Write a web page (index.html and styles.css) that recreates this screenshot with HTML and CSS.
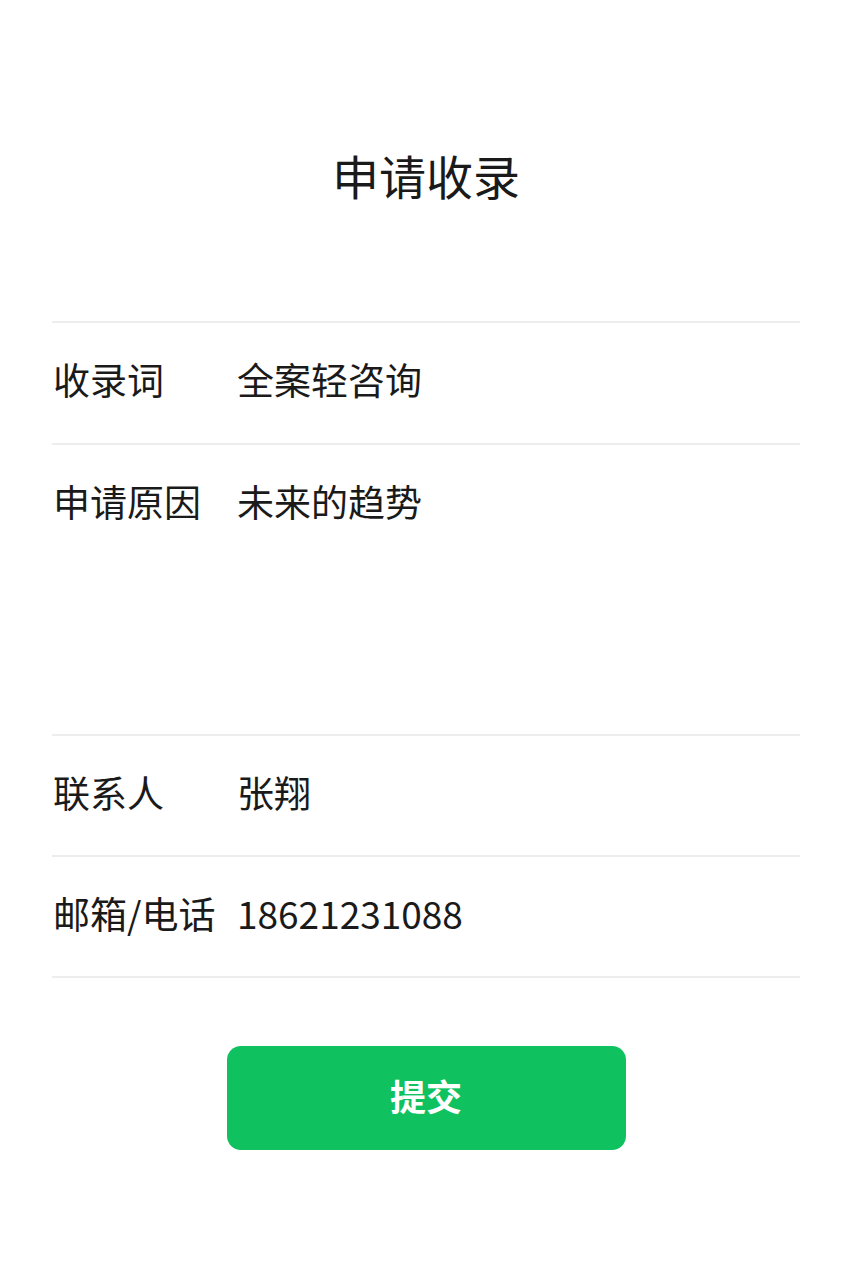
FILE: index.html
```html
<!DOCTYPE html>
<html lang="zh-CN">
<head>
<meta charset="utf-8">
<title>申请收录</title>
<link rel="stylesheet" href="styles.css">
</head>
<body>
<main class="page">
  <h1 class="title">申请收录</h1>
  <section class="form">
    <div class="row">
      <span class="label">收录词</span>
      <span class="value">全案轻咨询</span>
    </div>
    <div class="row row-tall">
      <span class="label">申请原因</span>
      <span class="value">未来的趋势</span>
    </div>
    <div class="row row-short">
      <span class="label">联系人</span>
      <span class="value">张翔</span>
    </div>
    <div class="row row-short">
      <span class="label">邮箱/电话</span>
      <span class="value">18621231088</span>
    </div>
  </section>
  <div class="actions">
    <button class="submit" type="button">提交</button>
  </div>
</main>
</body>
</html>
```

FILE: styles.css
```css
html, body {
  margin: 0;
  padding: 0;
  background: #ffffff;
}

body {
  font-family: "Noto Sans CJK SC", "Noto Sans", sans-serif;
  color: #1a1a1a;
}

.page {
  width: 853px;
  padding: 150px 53px 0 52px;
  box-sizing: border-box;
}

.title {
  margin: 0 0 121px;
  font-size: 47px;
  line-height: 50px;
  font-weight: 400;
  text-align: center;
  color: #1a1a1a;
}

.form {
  border-bottom: 2px solid #ededed;
}

.row {
  display: flex;
  align-items: flex-start;
  border-top: 2px solid #ededed;
  height: 120px;
  font-size: 37px;
  line-height: 112px;
}

.row-tall {
  height: 289px;
}

.row-short {
  height: 119px;
}

.label {
  width: 185px;
  flex: none;
  padding-left: 1px;
  box-sizing: border-box;
  white-space: nowrap;
}

.value {
  flex: 1;
  white-space: nowrap;
}

.actions {
  display: flex;
  justify-content: center;
  padding-top: 68px;
}

.submit {
  width: 399px;
  height: 104px;
  border: none;
  border-radius: 14px;
  background: #10c160;
  color: #ffffff;
  font-family: "Noto Sans CJK SC", "Noto Sans", sans-serif;
  font-size: 36px;
  font-weight: 700;
  padding: 0 0 6px;
  cursor: pointer;
}
```
